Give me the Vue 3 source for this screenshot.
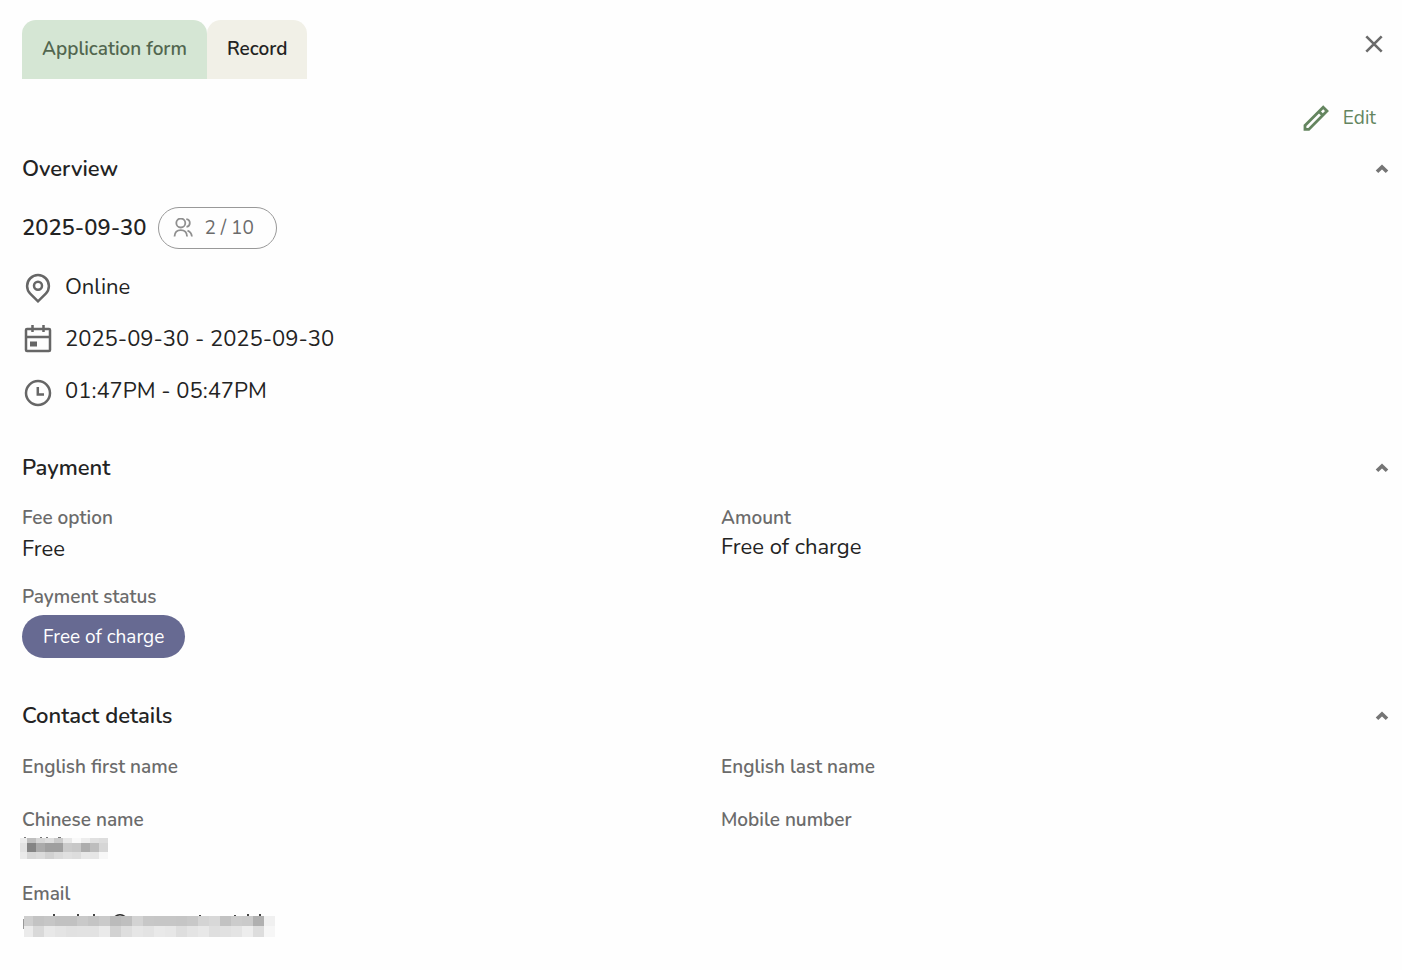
<script setup>
import { ref } from 'vue'

const activeTab = ref('form')
const open = ref({ overview: true, payment: true, contact: true })
const toggle = (key) => {
  open.value[key] = !open.value[key]
}

// Redacted values are shown as rows of grey cells; numbers are grey levels.
const buildCells = (rows, first, step) =>
  rows.flatMap(({ y, h, levels }) =>
    levels.map((v, i) => ({
      x: i === 0 ? 0 : first + (i - 1) * step,
      y,
      w: i === 0 ? first : step,
      h,
      fill: `rgb(${v},${v},${v})`,
    })),
  )

const nameCells = buildCells(
  [
    { y: 2, h: 5, levels: [236, 191, 214, 222, 203, 232, 249, 237, 224, 221] },
    { y: 7, h: 9, levels: [226, 132, 170, 159, 159, 202, 199, 173, 189, 214] },
    { y: 16, h: 7, levels: [234, 215, 219, 209, 218, 224, 221, 232, 230, 247] },
  ],
  7,
  9,
)

const emailCells = buildCells(
  [
    { y: 2, h: 10, levels: [206, 195, 198, 193, 193, 201, 196, 202, 187, 191, 211, 199, 198, 198, 197, 200, 212, 216, 194, 204, 202, 176, 240] },
    { y: 12, h: 11, levels: [235, 217, 232, 228, 225, 226, 226, 234, 210, 222, 230, 227, 233, 231, 222, 228, 232, 223, 225, 228, 237, 221, 246] },
  ],
  9,
  11,
)
</script>

<template>
  <main class="page">
    <header class="top">
      <div class="tabs" role="tablist">
        <button
          class="tab tab-form"
          type="button"
          role="tab"
          :aria-selected="activeTab === 'form'"
          @click="activeTab = 'form'"
        >Application form</button>
        <button
          class="tab tab-record"
          type="button"
          role="tab"
          :aria-selected="activeTab === 'record'"
          @click="activeTab = 'record'"
        >Record</button>
      </div>
      <button class="close" type="button" aria-label="Close">
        <svg width="18" height="18" viewBox="0 0 18 18"><path d="M1.300 1.300l15.400 15.400M16.700 1.300l-15.400 15.400" fill="none" stroke="#6b6b6b" stroke-width="2.600" /></svg>
      </button>
    </header>

    <div class="actions">
      <button class="edit" type="button">
        <svg width="26" height="26" viewBox="0 0 26 26" fill="none" stroke="#64855f" stroke-width="2.800" stroke-linejoin="miter">
          <path d="M2 20.400L20.200 2.200L24 6L5.800 24.400H2z" />
          <path d="M16 6.400l4 4" />
        </svg>
        <span>Edit</span>
      </button>
    </div>

    <section class="overview">
      <div class="head">
        <h2>Overview</h2>
        <button class="toggle" type="button" aria-label="Toggle overview" :aria-expanded="open.overview" @click="toggle('overview')">
          <svg width="14" height="10" viewBox="0 0 14 10"><path d="M2 7.8L7 2.9l5 4.9" fill="none" stroke="#757575" stroke-width="3.6" /></svg>
        </button>
      </div>
      <div v-show="open.overview">
        <div class="date-row">
          <strong>2025-09-30</strong>
          <span class="count">
            <svg width="20" height="20" viewBox="0 0 20 20" fill="none" stroke="#8f8f8f" stroke-width="1.8">
              <circle cx="7.800" cy="5" r="4.500" />
              <path d="M1.500 18.500c.3-4.300 2.700-6.300 6.300-6.300s6 2 6.300 6.300M13.300 1.200c2 .3 3.500 1.800 3.500 3.800s-1.300 3.500-3.300 3.800M14.500 12.600c2.300.8 4 2.800 4.400 5.900" />
            </svg>
            2 / 10
          </span>
        </div>
        <ul class="facts">
          <li>
            <svg width="32" height="32" viewBox="0 0 32 32" fill="none" stroke="#666" stroke-width="2.500">
              <path d="M16 30.300L8.200 22.600A10.900 10.900 0 1 1 23.800 22.600z" />
              <circle cx="16" cy="14.800" r="4" />
            </svg>
            Online
          </li>
          <li>
            <svg width="32" height="32" viewBox="0 0 32 32" fill="none" stroke="#666" stroke-width="2.500">
              <rect x="4" y="6" width="24" height="22" rx="1" />
              <path d="M3 14h26M10.500 2v7M21.500 2v7" />
              <rect x="8" y="18.500" width="7" height="5" fill="#666" stroke="none" />
            </svg>
            2025-09-30 - 2025-09-30
          </li>
          <li>
            <svg width="32" height="32" viewBox="0 0 32 32" fill="none" stroke="#666" stroke-width="2.500">
              <circle cx="16" cy="18" r="12" />
              <path d="M15.800 12v7.500H22" />
            </svg>
            01:47PM - 05:47PM
          </li>
        </ul>
      </div>
    </section>

    <section class="payment">
      <div class="head">
        <h2>Payment</h2>
        <button class="toggle" type="button" aria-label="Toggle payment" :aria-expanded="open.payment" @click="toggle('payment')">
          <svg width="14" height="10" viewBox="0 0 14 10"><path d="M2 7.8L7 2.9l5 4.9" fill="none" stroke="#757575" stroke-width="3.6" /></svg>
        </button>
      </div>
      <dl v-show="open.payment" class="fields">
        <div class="field">
          <dt>Fee option</dt>
          <dd>Free</dd>
        </div>
        <div class="field field-tight">
          <dt>Amount</dt>
          <dd>Free of charge</dd>
        </div>
        <div class="field field-loose">
          <dt>Payment status</dt>
          <dd><span class="pill">Free of charge</span></dd>
        </div>
      </dl>
    </section>

    <section class="contact">
      <div class="head">
        <h2>Contact details</h2>
        <button class="toggle" type="button" aria-label="Toggle contact details" :aria-expanded="open.contact" @click="toggle('contact')">
          <svg width="14" height="10" viewBox="0 0 14 10"><path d="M2 7.8L7 2.9l5 4.9" fill="none" stroke="#757575" stroke-width="3.6" /></svg>
        </button>
      </div>
      <dl v-show="open.contact" class="fields">
        <div class="field">
          <dt>English first name</dt>
          <dd></dd>
        </div>
        <div class="field">
          <dt>English last name</dt>
          <dd></dd>
        </div>
        <div class="field">
          <dt>Chinese name</dt>
          <dd>
            <svg class="mosaic mosaic-name" width="88" height="23" viewBox="0 0 88 23" shape-rendering="crispEdges" aria-label="Hidden value">
              <path d="M4 1h2v1h-2zM20 1h2v1h-2zM26 1h2v1h-2zM38 1h3v1h-3z" fill="#777" />
              <rect v-for="(c, i) in nameCells" :key="i" :x="c.x" :y="c.y" :width="c.w" :height="c.h" :fill="c.fill" />
            </svg>
          </dd>
        </div>
        <div class="field">
          <dt>Mobile number</dt>
          <dd></dd>
        </div>
        <div class="field field-email">
          <dt>Email</dt>
          <dd>
            <svg class="mosaic mosaic-email" width="252" height="23" viewBox="-1 0 252 23" shape-rendering="crispEdges" aria-label="Hidden value">
              <path d="M29 0h2v2h-2zM53 0h2v2h-2zM69 0h2v2h-2zM223 0h2v2h-2zM235 0h2v2h-2zM175 1h2v1h-2zM210 1h2v1h-2z" fill="#444" />
              <path d="M91 2.500q5-3.500 10 0" fill="none" stroke="#333" stroke-width="1.500" shape-rendering="auto" />
              <path d="M-1 5h1v10h-1z" fill="#999" />
              <rect v-for="(c, i) in emailCells" :key="i" :x="c.x" :y="c.y" :width="c.w" :height="c.h" :fill="c.fill" />
            </svg>
          </dd>
        </div>
      </dl>
    </section>
  </main>
</template>

<style>
body {
  background: #fefefe;
}
</style>

<style scoped>
.page {
  box-sizing: border-box;
  padding: 20px 12px 20px 22px;
  font-family: "Nunito", "Noto Sans", sans-serif;
  font-size: 22px;
  line-height: 30px;
  color: #232323;
}

button {
  padding: 0;
  border: 0;
  background: none;
  font: inherit;
  color: inherit;
  cursor: pointer;
}

svg {
  display: block;
  flex: none;
}

.top,
.tabs,
.head,
.edit,
.date-row,
.count,
.facts li {
  display: flex;
  align-items: center;
}

.top {
  justify-content: space-between;
  align-items: flex-start;
}

.tab {
  height: 59px;
  padding: 0 20px 2px;
  border-radius: 14px 14px 0 0;
  font-size: 19px;
  line-height: 24px;
  font-weight: 600;
}

.tab-form {
  background: #d5e6d4;
  color: #52664f;
}

.tab-record {
  background: #f1f0e7;
}

.close {
  margin: 15px 7px 0 0;
}

.actions {
  display: flex;
  justify-content: flex-end;
  margin: 19px 14px 16px 0;
}

.edit {
  gap: 14px;
  height: 40px;
  color: #64855f;
  font-size: 19px;
}

.head {
  justify-content: space-between;
}

h2 {
  margin: 0;
  font-size: 22px;
  font-weight: 600;
}

.toggle {
  margin-right: 1px;
}

.date-row {
  gap: 12px;
  margin-top: 23px;
}

.date-row strong {
  font-weight: 600;
}

.count {
  box-sizing: border-box;
  gap: 11px;
  height: 42px;
  padding: 0 22px 0 14px;
  border: 1px solid #999;
  border-radius: 21px;
  color: #6b6b6b;
  font-size: 19px;
}

.facts {
  display: grid;
  gap: 20px;
  margin: 22px 0 0;
  padding: 0;
  list-style: none;
}

.facts li {
  gap: 11px;
  height: 32px;
}

.payment {
  margin-top: 46px;
}

.contact {
  margin-top: 43px;
}

.fields {
  display: grid;
  grid-template-columns: 1fr 1fr;
  gap: 21px 30px;
  margin: 23px 0 0;
}

.contact .fields {
  row-gap: 23px;
  margin-top: 24px;
}

.field {
  display: flex;
  flex-direction: column;
  gap: 4px;
}

.field-tight {
  gap: 2px;
}

.field-loose {
  gap: 6px;
}

.field-email {
  gap: 8px;
}

dt {
  font-size: 19px;
  line-height: 24px;
  font-weight: 600;
  color: #6b6b6b;
}

dd {
  min-height: 2px;
  margin: 0;
}

.pill {
  display: flex;
  align-items: center;
  width: fit-content;
  height: 43px;
  padding: 0 21px;
  border-radius: 22px;
  background: #676a92;
  color: #fff;
  font-size: 19px;
}

.mosaic-name {
  margin-left: -2px;
}

.mosaic-email {
  margin-left: 1px;
}
</style>
